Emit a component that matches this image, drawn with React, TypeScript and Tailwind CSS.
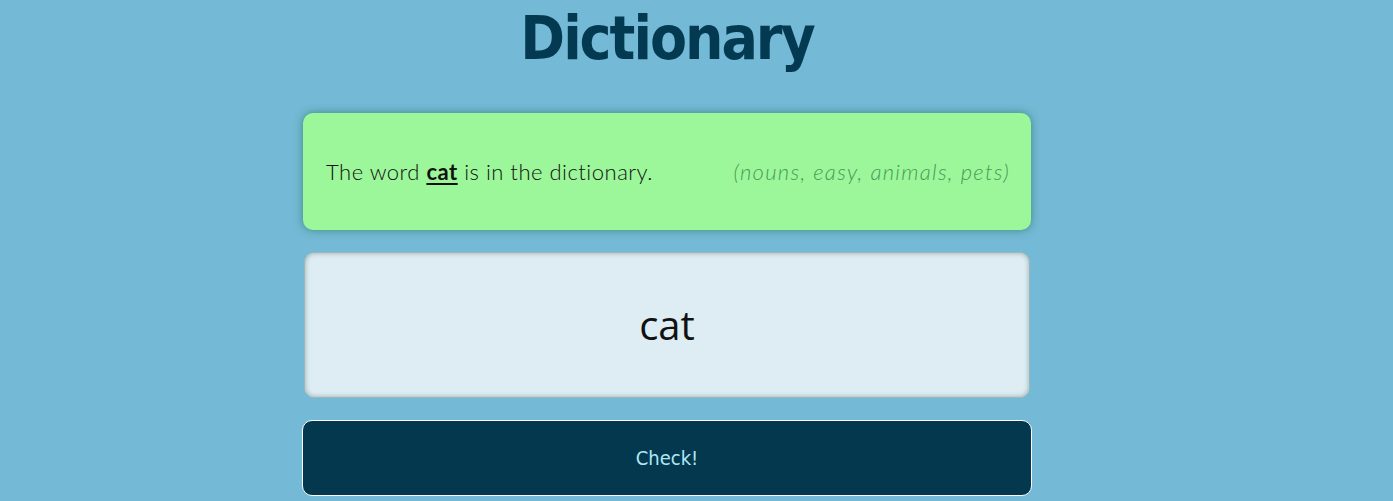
export default function App() {
  return (
    <div className="min-h-[501px] w-full bg-[#74b9d5] overflow-hidden">
      <div className="ml-[302px] w-[730px] flex flex-col">
        <h1 className="text-center text-[60px] leading-[76px] font-bold text-[#033a52] tracking-[-2px] [font-family:'DejaVu_Sans_Condensed','DejaVu_Sans',sans-serif]">
          Dictionary
        </h1>

        <div className="mt-[37px] mx-px h-[117px] rounded-[10px] bg-[#9cf79a] shadow-[0_0_8px_rgba(20,100,60,0.55)] flex items-center justify-between pl-[23px] pr-[21px] [font-family:'Lato',sans-serif]">
          <p className="text-[22px] tracking-[0.5px] text-[#111] font-light">
            The word <span className="font-bold underline underline-offset-[3px] decoration-2">cat</span> is in the dictionary.
          </p>
          <p className="text-[22px] tracking-[1.3px] italic font-light text-[#4a9a58]">(nouns, easy, animals, pets)</p>
        </div>

        <div className="mt-[22px] mx-[2px] h-[146px] rounded-[10px] bg-[#ddedf3] border border-[#9fb5b8] shadow-[inset_0_0_5px_rgba(60,90,90,0.45)] flex items-center justify-center">
          <span className="text-[40px] text-[#111] [font-family:'Open_Sans',sans-serif]">cat</span>
        </div>

        <button
          type="button"
          className="mt-[22px] h-[76px] rounded-[10px] bg-[#03384e] border border-white text-[#b0e6f5] text-[20px] [font-family:'DejaVu_Sans_Condensed','DejaVu_Sans',sans-serif]"
        >
          Check!
        </button>
      </div>
    </div>
  )
}
